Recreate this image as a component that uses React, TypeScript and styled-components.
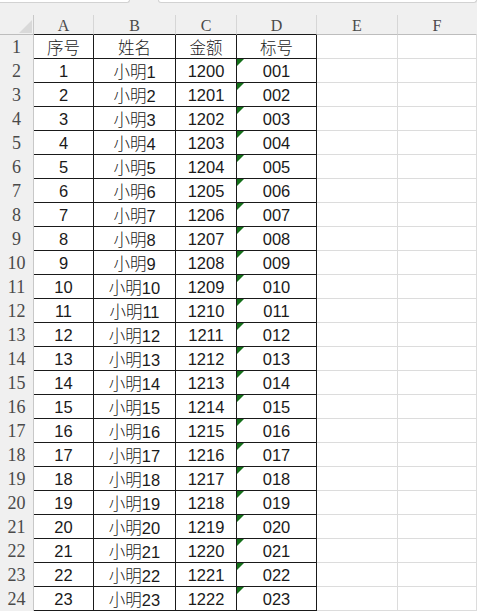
import React from "react";
import styled, { createGlobalStyle, css } from "styled-components";

const Global = createGlobalStyle`
  html, body { margin: 0; padding: 0; background: #ffffff; }
  body { overflow: hidden; font-family: "Liberation Sans", "Noto Sans CJK SC", sans-serif; }
  * { box-sizing: border-box; }
`;

const Page = styled.div`
  width: 477px;
  height: 612px;
  overflow: hidden;
  background: #ffffff;
  display: flex;
  flex-direction: column;
`;

const TopStrip = styled.div`
  height: 15px;
  background: #f0f0f0;
  display: flex;
  gap: 28px;
  flex-shrink: 0;
`;

const Tab = styled.div<{ $w: string; $left?: boolean }>`
  width: ${(p) => p.$w};
  height: 3px;
  background: #ffffff;
  border: 1px solid #d2d2d2;
  border-top: none;
  border-radius: 0 0 6px 6px;
  ${(p) => p.$left && css`margin-left: -10px;`}
`;

const Sheet = styled.div`
  display: grid;
  grid-template-columns: 34px 60px 82px 61px 80px 81px 1fr;
  grid-auto-rows: 24px;
  grid-template-rows: 20px;
`;

const Corner = styled.div`
  background: #f0f0f0;
  border-right: 1px solid #c8c8c8;
  border-bottom: 1px solid #bdbdbd;
  display: flex;
  align-items: flex-end;
  justify-content: flex-end;
  padding: 0 1px 1px 0;
`;

const ColHead = styled.div<{ $table: boolean; $last?: boolean }>`
  background: #f0f0f0;
  border-right: 1px solid ${(p) => (p.$last ? "transparent" : "#d6d6d6")};
  border-bottom: 1px solid ${(p) => (p.$table ? "#1a1a1a" : "#bdbdbd")};
  display: flex;
  align-items: center;
  justify-content: center;
  font-family: "Liberation Serif", serif;
  font-size: 16px;
  color: #4a4a4a;
  padding-top: 2px;
`;

const RowHead = styled.div`
  background: #f0f0f0;
  border-right: 1px solid #c8c8c8;
  display: flex;
  align-items: center;
  justify-content: center;
  font-family: "Liberation Serif", serif;
  font-size: 18px;
  color: #4a4a4a;
  padding-top: 1px;
`;

const Cell = styled.div<{ $table: boolean; $flag?: boolean }>`
  position: relative;
  border-right: 1px solid ${(p) => (p.$table ? "#1a1a1a" : "#dcdcdc")};
  border-bottom: 1px solid ${(p) => (p.$table ? "#1a1a1a" : "#dcdcdc")};
  display: flex;
  align-items: center;
  justify-content: center;
  font-family: "Liberation Sans", "Noto Sans CJK SC", sans-serif;
  font-weight: 300;
  font-size: 16.5px;
  color: #1a1a1a;
  padding-top: 1px;
  ${(p) =>
    p.$flag &&
    css`
      &::before {
        content: "";
        position: absolute;
        top: 0;
        left: 0;
        width: 0;
        height: 0;
        border-top: 7px solid #15701a;
        border-right: 7px solid transparent;
      }
    `}
`;

const cols = ["A", "B", "C", "D", "E", "F"];

const rows = Array.from({ length: 23 }, (_, i) => ({
  no: String(i + 1),
  name: `小明${i + 1}`,
  amount: String(1200 + i),
  code: String(i + 1).padStart(3, "0"),
}));

export default function App() {
  return (
    <Page>
      <Global />
      <TopStrip>
        <Tab $w="145px" $left />
        <Tab $w="330px" />
      </TopStrip>
      <Sheet>
        <Corner>
          <svg width="13" height="13" viewBox="0 0 13 13">
            <polygon points="13,0 13,13 0,13" fill="#d9d9d9" />
          </svg>
        </Corner>
        {cols.map((c, i) => (
          <ColHead key={c} $table={i < 4} $last={i === 5}>
            {c}
          </ColHead>
        ))}

        <RowHead>1</RowHead>
        <Cell $table>序号</Cell>
        <Cell $table>姓名</Cell>
        <Cell $table>金额</Cell>
        <Cell $table>标号</Cell>
        <Cell $table={false} />
        <Cell $table={false} />

        {rows.map((r, i) => (
          <React.Fragment key={r.no}>
            <RowHead>{i + 2}</RowHead>
            <Cell $table>{r.no}</Cell>
            <Cell $table>{r.name}</Cell>
            <Cell $table>{r.amount}</Cell>
            <Cell $table $flag>
              {r.code}
            </Cell>
            <Cell $table={false} />
            <Cell $table={false} />
          </React.Fragment>
        ))}
      </Sheet>
    </Page>
  );
}
